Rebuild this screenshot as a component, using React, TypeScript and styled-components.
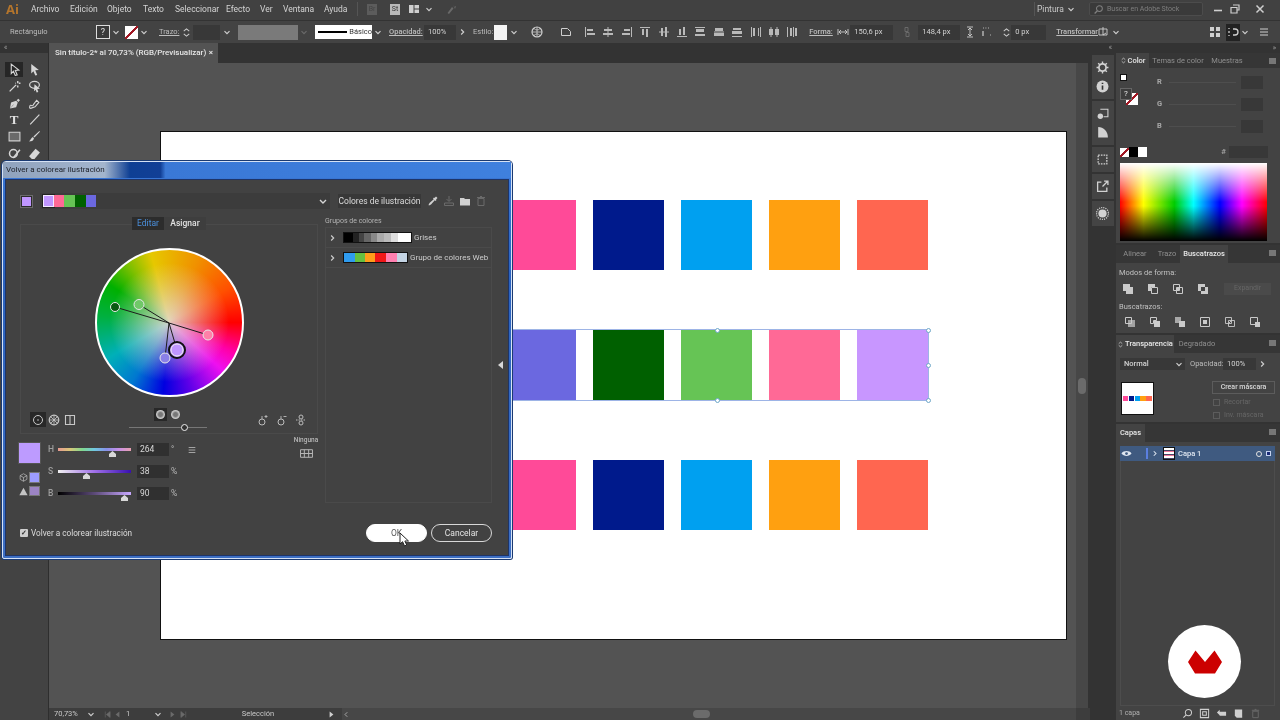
import React from "react";
import styled, { createGlobalStyle } from "styled-components";

const GlobalStyle = createGlobalStyle`
  html, body {
    margin: 0;
    background: #3d3d3d;
    font-family: Roboto, "Liberation Sans", sans-serif;
  }
`;

/* ---------- icons ---------- */
const icons: Record<string, React.ReactNode> = {
  chevron: <path d="M3 5l3 3 3-3" fill="none" stroke="currentColor" strokeWidth="1.4" />,
  right: <path d="M5 3l3 3-3 3" fill="none" stroke="currentColor" strokeWidth="1.4" />,
  left: <path d="M7 3L4 6l3 3" fill="none" stroke="currentColor" strokeWidth="1.2" />,
  play: <path d="M3.5 2l5 4-5 4z" fill="currentColor" />,
  playBack: <path d="M8.5 2l-5 4 5 4z" fill="currentColor" />,
  first: <path d="M3 2v8M9.5 2l-5 4 5 4z" fill="currentColor" stroke="currentColor" strokeWidth=".8" />,
  last: <path d="M9 2v8M2.5 2l5 4-5 4z" fill="currentColor" stroke="currentColor" strokeWidth=".8" />,
  spinner: <path d="M3 4.5L6 2l3 2.5M3 7.5L6 10l3-2.5" fill="none" stroke="currentColor" strokeWidth="1.1" />,
  globe: (
    <>
      <circle cx="6" cy="6" r="5" fill="none" stroke="currentColor" strokeWidth="1.2" />
      <path d="M1 6h10M6 1v10M3 2.5c2 2 4 2 6 0M3 9.5c2-2 4-2 6 0" fill="none" stroke="currentColor" strokeWidth=".8" />
    </>
  ),
  doc: <path d="M1.5 2.5h6l3 3v4h-9z" fill="none" stroke="currentColor" strokeWidth="1" />,
  grid: <path d="M1 1h4v4H1zM7 1h4v4H7zM1 7h4v4H1zM7 7h4v4H7z" fill="currentColor" />,
  list: <path d="M2 3h8M2 6h8M2 9h8" stroke="currentColor" strokeWidth="1" fill="none" />,
  width: <path d="M1 3v6M11 3v6M2 6h8M2 6l2-2M2 6l2 2M10 6L8 4M10 6L8 8" stroke="currentColor" strokeWidth=".9" fill="none" />,
  height: <path d="M3 1h6M3 11h6M6 2v8M6 2L4 4M6 2l2 2M6 10L4 8M6 10l2-2" stroke="currentColor" strokeWidth=".9" fill="none" />,
  link: <path d="M4 1.5h3v4H4zM5 6.5h3v4H5z" stroke="currentColor" fill="none" strokeWidth="1" />,
  corner: <path d="M2 10V5M2 2h.8M4.5 2h.8M7 2h.8M9 9h.8" stroke="currentColor" strokeWidth="1.2" fill="none" />,
  transform: <path d="M2 3h8v6H2zM6 1v8l3-2" stroke="currentColor" strokeWidth=".9" fill="none" />,
  panelDock: <path d="M2 2v1M2 5v2M2 9v1M6 3h2a2 2 0 010 6H6" stroke="currentColor" strokeWidth="1.3" fill="none" />,
  search: (
    <>
      <circle cx="7" cy="5" r="3.2" fill="none" stroke="currentColor" strokeWidth="1.1" />
      <path d="M4.8 7.4L1.8 10.4" stroke="currentColor" strokeWidth="1.4" />
    </>
  ),
  layout: <path d="M1 2h4.5v8H1zM6.5 2H11v3.5H6.5zM6.5 6.5H11V10H6.5z" fill="currentColor" />,
  sync: <path d="M1.5 10L6 4l1.5 1.5L3 11zM7 1l1 3 2-1-1 3" fill="currentColor" />,
  minimize: <path d="M2 7.5h8" stroke="currentColor" strokeWidth="1.6" fill="none" />,
  maximize: <path d="M4 2h6v5H8M2 4.5h6V10H2z" stroke="currentColor" strokeWidth="1.2" fill="none" />,
  close: <path d="M2.5 2.5l7 7M9.5 2.5l-7 7" stroke="currentColor" strokeWidth="1.5" fill="none" />,
  arrowTool: <path d="M3 1l7 5.5-3.3.3L8.5 11 6.7 11.5 5 7.6 3 9.8z" fill="none" stroke="currentColor" strokeWidth="1" />,
  directTool: <path d="M3 1l7 5.5-3.3.3L8.5 11 6.7 11.5 5 7.6 3 9.8z" fill="currentColor" />,
  wand: <path d="M1.5 10.5l6-6M9 1v2M9 5v2M7 3h-.5M11.5 3H10" stroke="currentColor" strokeWidth="1.3" fill="none" />,
  lasso: (
    <>
      <ellipse cx="6" cy="4.5" rx="4.5" ry="3.2" fill="none" stroke="currentColor" strokeWidth="1.1" />
      <path d="M6 4l5 4-2.4.2L9.500 11l-1.500.5-1-2.600L5.500 10.400z" fill="currentColor" />
    </>
  ),
  pen: <path d="M9.5 1.5l1.5 1.5-1.5 1.5-1.5-1.5zM7.5 3.5l1.5 1.5-1.5 4.5-5.5 1 3.2-3.3-.2-.2L1.800 10.500l1-5.500z" fill="currentColor" />,
  curvature: <path d="M1.5 10C1.5 5 4 10 5 7L8 3l2 2-3.5 4-4 1.500z" fill="none" stroke="currentColor" strokeWidth="1" />,
  line: <path d="M2 10.5L10.5 1.5" stroke="currentColor" strokeWidth="1.1" fill="none" />,
  rect: <path d="M1 2h10v8H1z" fill="#6a6a6a" stroke="#cfcfcf" strokeWidth="1" />,
  brush: <path d="M10.5 1L11 1.5 6 7 5 6zM4.5 6.5L5.5 7.5C5 10 3 10.5 1 10.5 2.5 9.5 2.5 7.5 4.5 6.5z" fill="currentColor" />,
  shaper: (
    <>
      <circle cx="5" cy="6" r="3.6" fill="none" stroke="currentColor" strokeWidth="1.4" />
      <path d="M5 10L11 2.5" stroke="currentColor" strokeWidth="1.4" />
    </>
  ),
  eraser: <path d="M7 1.5l4 3.500-5 6H3.500L1 8.500z" fill="currentColor" />,
  eyedropper: <path d="M9 1.5l1.5 1.5-1.5 1.5.5.5-1 1-.7-.7L4 9.500 2 10.500 1.500 10l1-2 4.200-3.800-.7-.7 1-1 .5.5z" fill="currentColor" />,
  download: <path d="M6 1v5M3.5 4L6 6.5 8.5 4M1.5 8h9v2.5h-9z" stroke="currentColor" fill="none" strokeWidth="1" />,
  folder: <path d="M1 3h4l1 1h5v6.500H1z" fill="currentColor" />,
  trash: <path d="M3 3.5h6v7H3zM2 2.5h8M5 1.5h2" stroke="currentColor" fill="none" strokeWidth="1" />,
  gear: (
    <>
      <circle cx="6" cy="6" r="3.3" fill="none" stroke="currentColor" strokeWidth="1.6" />
      <path d="M6 .5v2M6 9.500v2M.5 6h2M9.500 6h2M2 2l1.500 1.500M8.500 8.500L10 10M10 2L8.500 3.500M3.500 8.500L2 10" stroke="currentColor" strokeWidth="1.3" />
    </>
  ),
  info: (
    <>
      <circle cx="6" cy="6" r="5.5" fill="currentColor" />
      <path d="M6 5v4M6 2.5v1.2" stroke="#333" strokeWidth="1.5" />
    </>
  ),
  export: <path d="M5 2H1.5v8.500H10V7M6 6l5-5M7.500 1H11v3.500" stroke="currentColor" fill="none" strokeWidth="1.2" />,
  assets: (
    <>
      <path d="M4 2h7v7H7" stroke="currentColor" fill="none" strokeWidth="1" />
      <circle cx="4" cy="8.5" r="2.5" fill="currentColor" />
    </>
  ),
  shade: <path d="M2 1c5 0 9 4 9 9.500H2z" fill="currentColor" />,
  artboards: <path d="M2 2h8v8H2z" fill="none" stroke="currentColor" strokeWidth="1.2" strokeDasharray="1.5 1" />,
  burst: (
    <>
      <circle cx="6" cy="6" r="3.8" fill="currentColor" />
      <circle cx="6" cy="6" r="5.5" fill="none" stroke="currentColor" strokeWidth="1.2" strokeDasharray="1 1" />
    </>
  ),
  cube: <path d="M6 1l4.500 2.500v5L6 11 1.500 8.500v-5zM1.500 3.500L6 6l4.500-2.500M6 6v5" stroke="currentColor" fill="none" strokeWidth=".9" />,
  warn: <path d="M6 1l5.500 10H.5z" fill="currentColor" />,
  addColor: (
    <>
      <circle cx="5" cy="8" r="3" fill="none" stroke="currentColor" strokeWidth="1" />
      <path d="M5 5V2M9 1v3M7.500 2.500h3" stroke="currentColor" fill="none" strokeWidth=".9" />
    </>
  ),
  subColor: (
    <>
      <circle cx="5" cy="8" r="3" fill="none" stroke="currentColor" strokeWidth="1" />
      <path d="M5 5V2M7.500 2.500h3" stroke="currentColor" fill="none" strokeWidth=".9" />
    </>
  ),
  linkColor: (
    <>
      <circle cx="6" cy="3" r="2" fill="none" stroke="currentColor" strokeWidth="1" />
      <circle cx="6" cy="9" r="2" fill="none" stroke="currentColor" strokeWidth="1" />
      <path d="M1 6h10" stroke="currentColor" strokeWidth="1" strokeDasharray="1.5 1" />
    </>
  ),
  ring: (
    <>
      <circle cx="6" cy="6" r="4.5" fill="none" stroke="currentColor" strokeWidth="1" />
      <circle cx="6" cy="6" r=".8" fill="currentColor" />
    </>
  ),
  segments: (
    <>
      <circle cx="6" cy="6" r="4.8" fill="none" stroke="currentColor" strokeWidth="1.2" />
      <path d="M6 1v10M1 6h10M2.500 2.500l7 7M9.500 2.500l-7 7" stroke="currentColor" strokeWidth=".8" />
    </>
  ),
  bars: <path d="M1.500 1.500h9v9h-9zM6 1.500v9" fill="none" stroke="currentColor" strokeWidth="1.1" />,
  ninguna: <path d="M.5 2.500h11v7H.5zM.5 6h11M4 2.500v7M8 2.500v7" fill="none" stroke="currentColor" strokeWidth=".9" />,
  eye: (
    <>
      <path d="M.5 6C3 2.500 9 2.500 11.500 6 9 9.500 3 9.500.5 6z" fill="currentColor" />
      <circle cx="6" cy="6" r="1.5" fill="#3f5a80" />
    </>
  ),
  zoomGlass: (
    <>
      <circle cx="7" cy="5" r="3.4" fill="none" stroke="currentColor" strokeWidth="1.1" />
      <path d="M4.600 7.500L1.500 10.500" stroke="currentColor" strokeWidth="1.2" />
    </>
  ),
  clip: <path d="M1.500 1.500h9v9h-9zM4 4h4v4H4z" fill="none" stroke="currentColor" strokeWidth="1.1" />,
  moveLayer: <path d="M1 5l3-3v2h7v4.500H4V8z" fill="currentColor" />,
  newLayer: <path d="M2 1.500h8v9H4L2 8.500z" fill="currentColor" />,
  /* pathfinder: two overlapping squares, filled or outlined */
  pfUnite: <path d="M1 1h7v3h3v7H4V8H1z" fill="currentColor" />,
  pfMinus: (
    <>
      <path d="M1 1h7v3H4v4H1z" fill="currentColor" />
      <path d="M4.500 4.500h6v6h-6z" fill="none" stroke="currentColor" strokeWidth="1" />
    </>
  ),
  pfIntersect: (
    <>
      <path d="M1.500 1.500h6v6h-6zM4.500 4.500h6v6h-6z" fill="none" stroke="currentColor" strokeWidth="1" />
      <path d="M4.500 4.500h3v3h-3z" fill="currentColor" />
    </>
  ),
  pfExclude: <path d="M1 1h7v3h3v7H4V8H1zM4 4v4h4V4z" fill="currentColor" fillRule="evenodd" />,
  pfDivide: (
    <>
      <path d="M1.500 1.500h6v6h-6z" fill="none" stroke="currentColor" strokeWidth="1" />
      <path d="M4 4h7v7H4z" fill="currentColor" fillOpacity=".7" />
    </>
  ),
  pfTrim: (
    <>
      <path d="M1.500 1.500h6v3h-3v3h-3z" fill="none" stroke="currentColor" strokeWidth="1" />
      <path d="M5 5h6v6H5z" fill="currentColor" />
    </>
  ),
  pfMerge: (
    <>
      <path d="M1 1h6v6H1z" fill="currentColor" fillOpacity=".75" />
      <path d="M5 5h6v6H5z" fill="currentColor" />
    </>
  ),
  pfCrop: (
    <>
      <path d="M1.500 1.500h9v9h-9z" fill="none" stroke="currentColor" strokeWidth="1" />
      <path d="M4 4h4v4H4z" fill="currentColor" />
    </>
  ),
  pfOutline: <path d="M1.500 1.500h6v6h-6zM4.500 4.500h6v6h-6zM4.500 7.500l3-3" fill="none" stroke="currentColor" strokeWidth=".9" />,
  pfBack: (
    <>
      <path d="M1.500 1.500h7v7h-7z" fill="none" stroke="currentColor" strokeWidth="1" />
      <path d="M6 6h5v5H6z" fill="currentColor" />
    </>
  ),
};

type IconProps = { name: string; size?: number; className?: string };
const Icon = ({ name, size = 12, className }: IconProps) => (
  <svg width={size} height={size} viewBox="0 0 12 12" className={className} style={{ flex: "none" }}>
    {icons[name]}
  </svg>
);

/* align icons of the control bar: a bar and two blocks */
const alignShapes = [
  "M1 1h1v10H1zM3 3h6v2H3zM3 7h8v2H3z",
  "M5.500 1h1v10h-1zM2 3h8v2H2zM1 7h10v2H1z",
  "M10 1h1v10h-1zM3 3h6v2H3zM1 7h8v2H1z",
  "M1 1h10v1H1zM3 3h2v6H3zM7 3h2v8H7z",
  "M1 5.500h10v1H1zM3 2h2v8H3zM7 1h2v10H7z",
  "M1 10h10v1H1zM3 3h2v6H3zM7 1h2v8H7z",
  "M1 1h10v1H1zM2 3h8v3H2zM1 8h10v2H1z",
  "M1 5.500h10v1H1zM2 2h8v3H2zM1 7h10v3H1z",
  "M1 10h10v1H1zM2 2h8v2H2zM1 5h10v3H1z",
  "M1 1h1v10H1zM3 2h2v8H3zM8 2h1v8H8zM10 1h1v10h-1z",
  "M2.500 1h1v10h-1zM1 3h4v6H1zM8.500 1h1v10h-1zM7 3h4v6H7z",
  "M1 1h1v10H1zM4 2h2v8H4zM7 1h1v10H7zM9 2h2v8H9z",
];

/* ---------- page frame ---------- */
const Page = styled.div`
  width: 1280px;
  height: 720px;
  overflow: hidden;
  position: relative;
  display: flex;
  flex-direction: column;
  background: #3d3d3d;
  color: #d8d8d8;
  font-size: 8px;
  line-height: 1;
  filter: blur(0.3px);
`;

const Ghost = styled(Icon)<{ $dim?: boolean }>`
  color: ${(p) => (p.$dim ? "#6a6a6a" : "#d0d0d0")};
`;

/* ---------- menu bar ---------- */
const MenuBar = styled.div`
  height: 20px;
  flex: none;
  display: flex;
  align-items: center;
  background: #414141;
  padding: 0 0 2px 6px;
  box-sizing: border-box;
`;
const AppLogo = styled.div`
  width: 25px;
  flex: none;
  font: 700 13px "Open Sans", sans-serif;
  color: #b4752c;
`;
const MenuItem = styled.span<{ $w: number }>`
  width: ${(p) => p.$w}px;
  flex: none;
  font-size: 8.5px;
  color: #d4d4d4;
`;
const BarSep = styled.div<{ $ml: number }>`
  width: 1px;
  height: 14px;
  flex: none;
  margin-left: ${(p) => p.$ml}px;
  background: #555;
`;
const BridgeBadge = styled.div<{ $on?: boolean; $ml: number }>`
  width: 10px;
  height: 11px;
  flex: none;
  margin-left: ${(p) => p.$ml}px;
  display: flex;
  align-items: center;
  justify-content: center;
  font-size: 7px;
  background: ${(p) => (p.$on ? "#b8b8b8" : "#5c5c5c")};
  color: ${(p) => (p.$on ? "#333" : "#444")};
`;
const Spot = styled.div<{ $ml?: number; $w?: number }>`
  margin-left: ${(p) => p.$ml ?? 0}px;
  width: ${(p) => (p.$w ? `${p.$w}px` : "auto")};
  flex: none;
  display: flex;
  align-items: center;
  justify-content: center;
  color: #cfcfcf;
`;
const Workspace = styled.span`
  margin-left: 2px;
  width: 26px;
  flex: none;
  font-size: 8.5px;
  color: #c8c8c8;
`;
const StockSearch = styled.div`
  margin-left: 13px;
  width: 114px;
  height: 14px;
  flex: none;
  display: flex;
  align-items: center;
  gap: 3px;
  padding-left: 3px;
  box-sizing: border-box;
  background: #3a3a3a;
  border: 1px solid #4c4c4c;
  border-radius: 2px;
  color: #7f7f7f;
  font-size: 7px;
`;

/* ---------- control bar ---------- */
const ControlBar = styled.div`
  height: 23px;
  flex: none;
  display: flex;
  align-items: center;
  padding-left: 10px;
  background: #434343;
  border-top: 1px solid #333;
  box-sizing: border-box;
`;
const CtrlLabel = styled.span<{ $w?: number; $ml?: number; $link?: boolean; $bold?: boolean }>`
  flex: none;
  width: ${(p) => (p.$w ? `${p.$w}px` : "auto")};
  margin-left: ${(p) => p.$ml ?? 0}px;
  font-size: 7.5px;
  color: #bdbdbd;
  font-weight: ${(p) => (p.$bold ? 500 : 400)};
  text-decoration: ${(p) => (p.$link ? "underline" : "none")};
  white-space: nowrap;
`;
const FillBox = styled.div`
  width: 14px;
  height: 14px;
  box-sizing: border-box;
  border: 1px solid #ddd;
  background: #3a3a3a;
  color: #e2e2e2;
  font-size: 9px;
  display: flex;
  align-items: center;
  justify-content: center;
  flex: none;
`;
const NoneBox = styled.div<{ $w?: number }>`
  width: ${(p) => p.$w ?? 13}px;
  height: ${(p) => p.$w ?? 13}px;
  flex: none;
  background:
    linear-gradient(135deg, transparent 44%, #a21824 44%, #a21824 56%, transparent 56%),
    #fff;
`;
const DarkField = styled.div<{ $w: number; $ml?: number; $h?: number }>`
  flex: none;
  width: ${(p) => p.$w}px;
  height: ${(p) => p.$h ?? 15}px;
  margin-left: ${(p) => p.$ml ?? 0}px;
  display: flex;
  align-items: center;
  padding-left: 4px;
  box-sizing: border-box;
  background: #383838;
  color: #d2d2d2;
  font-size: 7.5px;
`;
const GreyField = styled.div`
  flex: none;
  width: 60px;
  height: 15px;
  margin-left: 5px;
  background: #7a7a7a;
`;
const StrokePreview = styled.div`
  flex: none;
  margin-left: 6px;
  width: 57px;
  height: 14px;
  display: flex;
  align-items: center;
  gap: 2px;
  padding-left: 3px;
  box-sizing: border-box;
  background: #fff;
  color: #333;
  font-size: 7.5px;
`;
const StrokeLine = styled.i`
  display: block;
  width: 30px;
  height: 2px;
  background: #000;
`;
const StyleSwatch = styled.div`
  flex: none;
  margin-left: 4px;
  width: 13px;
  height: 15px;
  background: #f4f4f4;
`;
const AlignRow = styled.div`
  margin-left: 9px;
  display: flex;
  gap: 6.4px;
  color: #b9b9b9;
  flex: none;
`;
const ActiveSpot = styled(Spot)`
  background: #222;
  height: 17px;
`;

/* ---------- work area ---------- */
const Work = styled.div`
  flex: 1;
  min-height: 0;
  display: flex;
`;
const ToolBox = styled.div`
  width: 49px;
  flex: none;
  box-sizing: border-box;
  background: #434343;
  border-right: 1px solid #2e2e2e;
  display: flex;
  flex-direction: column;
`;
const CollapseStrip = styled.div<{ $align?: string }>`
  height: 10px;
  flex: none;
  background: #333;
  color: #a0a0a0;
  font-size: 7px;
  display: flex;
  align-items: center;
  justify-content: ${(p) => p.$align ?? "flex-start"};
  padding: 0 4px;
`;
const ToolGrid = styled.div`
  margin-top: 9px;
  padding-left: 5px;
  display: grid;
  grid-template-columns: repeat(2, 20px);
  grid-auto-rows: 16.8px;
  color: #d6d6d6;
`;
const ToolCell = styled.div<{ $active?: boolean }>`
  width: 18px;
  height: 15px;
  display: flex;
  align-items: center;
  justify-content: center;
  background: ${(p) => (p.$active ? "#262626" : "transparent")};
`;
const TextTool = styled.span`
  font: 700 13px "Liberation Serif", serif;
  color: #e0e0e0;
`;

const Center = styled.div`
  flex: none;
  width: 1041px;
  display: flex;
  flex-direction: column;
  background: #333;
`;
const TabStrip = styled.div`
  height: 20px;
  flex: none;
  display: flex;
`;
const DocTab = styled.div`
  width: 169px;
  display: flex;
  align-items: center;
  justify-content: space-between;
  padding: 0 5px 0 6px;
  box-sizing: border-box;
  background: #535353;
  color: #e6e6e6;
  font-size: 8px;
  font-weight: 500;
`;
const DocRow = styled.div`
  flex: 1;
  min-height: 0;
  display: flex;
`;
const Canvas = styled.div`
  width: 1027px;
  flex: none;
  background: #535353;
  padding: 68px 0 0 111px;
  box-sizing: border-box;
`;
const Artboard = styled.div`
  width: 907px;
  height: 509px;
  box-sizing: border-box;
  background: #fff;
  border: 1px solid #111;
  padding: 68px 0 0 344px;
  display: flex;
  flex-direction: column;
  gap: 60px;
`;
const SwatchRow = styled.div<{ $selected?: boolean }>`
  position: relative;
  display: grid;
  grid-template-columns: repeat(5, 71px);
  gap: 17px;
  width: 423px;
  height: 70px;
  ${(p) => p.$selected && "outline: 1px solid #9db4e6;"}
`;
const Square = styled.div<{ $c: string }>`
  background: ${(p) => p.$c};
`;
const Handle = styled.i<{ $x: number; $y: number }>`
  position: absolute;
  left: ${(p) => p.$x}%;
  top: ${(p) => p.$y}%;
  width: 3px;
  height: 3px;
  margin: -2px;
  border-radius: 50%;
  background: #fff;
  border: 1px solid #6fa8c8;
  box-sizing: content-box;
`;
const VScroll = styled.div`
  width: 12px;
  flex: none;
  background: #474747;
  padding-top: 315px;
  box-sizing: border-box;
  display: flex;
  justify-content: center;
`;
const ScrollThumb = styled.div`
  width: 8px;
  height: 16px;
  border-radius: 4px;
  background: #6b6b6b;
`;
const StatusBar = styled.div`
  height: 12px;
  flex: none;
  display: flex;
  align-items: center;
  padding-left: 5px;
  background: #3d3d3d;
  font-size: 7.5px;
  color: #c8c8c8;
`;
const StatusField = styled.span<{ $w: number; $ml?: number; $center?: boolean }>`
  flex: none;
  width: ${(p) => p.$w}px;
  margin-left: ${(p) => p.$ml ?? 0}px;
  text-align: ${(p) => (p.$center ? "center" : "left")};
  white-space: nowrap;
`;
const HTrack = styled.div`
  margin-left: 6px;
  width: 734px;
  height: 12px;
  flex: none;
  background: #474747;
  display: flex;
  align-items: center;
  box-sizing: border-box;
  color: #b0b0b0;
`;
const HThumb = styled.div`
  margin-left: 342px;
  width: 17px;
  height: 8px;
  border-radius: 4px;
  background: #6b6b6b;
`;

/* ---------- dock and panels ---------- */
const Dock = styled.div`
  width: 26px;
  flex: none;
  background: #333;
  display: flex;
  flex-direction: column;
  box-sizing: border-box;
`;
const DockGroups = styled.div`
  padding: 2px 2px 0;
`;
const DockGroup = styled.div`
  background: #444;
  border-bottom: 2px solid #333;
  display: flex;
  flex-direction: column;
  align-items: center;
  gap: 6px;
  padding: 6px 2px 6px 0;
  color: #d2d2d2;
`;
const Panels = styled.div`
  width: 164px;
  flex: none;
  display: flex;
  flex-direction: column;
  background: #333;
`;
const PanelBlock = styled.div<{ $h?: number; $grow?: boolean }>`
  ${(p) => (p.$h ? `height: ${p.$h}px;` : "")}
  ${(p) => (p.$grow ? "flex: 1; min-height: 0;" : "flex: none;")}
  margin-bottom: ${(p) => (p.$grow ? 0 : 2)}px;
  background: #434343;
  display: flex;
  flex-direction: column;
`;
const PanelTabs = styled.div<{ $h?: number }>`
  height: ${(p) => p.$h ?? 18}px;
  flex: none;
  display: flex;
  align-items: stretch;
  background: #363636;
  position: relative;
`;
const PanelTab = styled.div<{ $active?: boolean; $w: number }>`
  width: ${(p) => p.$w}px;
  display: flex;
  align-items: center;
  justify-content: center;
  gap: 1px;
  font-size: 7.5px;
  font-weight: ${(p) => (p.$active ? 500 : 400)};
  color: ${(p) => (p.$active ? "#e8e8e8" : "#8f8f8f")};
  background: ${(p) => (p.$active ? "#434343" : "transparent")};
`;
const PanelMenu = styled.div`
  position: absolute;
  right: 4px;
  top: 5px;
  width: 7px;
  height: 6px;
  background: #777;
`;
const ColorGrid = styled.div`
  display: grid;
  grid-template-columns: 37px 1fr;
  padding: 3px 0 0 4px;
  height: 72px;
`;
const ColorWidget = styled.div`
  position: relative;
  width: 25px;
  height: 30px;
  margin-top: 3px;
`;
const MiniFill = styled.div`
  position: absolute;
  left: 0;
  top: 14px;
  width: 12px;
  height: 12px;
  z-index: 1;
  background: #3c3c3c;
  border: 1px solid #666;
  box-sizing: border-box;
  color: #e8e8e8;
  font-size: 8px;
  display: flex;
  align-items: center;
  justify-content: center;
`;
const MiniStroke = styled(NoneBox)`
  position: absolute;
  left: 6px;
  top: 19px;
`;
const MiniDefault = styled.div`
  width: 7px;
  height: 7px;
  background: #fff;
  border: 1px solid #111;
  box-sizing: border-box;
`;
const RgbRows = styled.div`
  display: grid;
  grid-auto-rows: 22px;
`;
const RgbRow = styled.div`
  display: flex;
  align-items: center;
  color: #a8a8a8;
  font-size: 7.5px;
  font-weight: 700;
`;
const RgbLabel = styled.span`
  width: 12px;
`;
const RgbTrack = styled.div`
  width: 67px;
  height: 1px;
  background: #4e4e4e;
`;
const QuickRow = styled.div`
  display: flex;
  align-items: center;
  padding: 0 12px 0 4px;
  height: 14px;
  margin-top: 2px;
`;
const QuickSwatch = styled.div<{ $c: string }>`
  width: 9px;
  height: 10px;
  background: ${(p) => p.$c};
  flex: none;
`;
const HashMark = styled.span`
  margin-left: auto;
  margin-right: 3px;
  color: #a0a0a0;
  font-size: 8px;
  font-weight: 700;
`;
const Spectrum = styled.div`
  margin: 4px 0 0 4px;
  width: 147px;
  height: 78px;
  background:
    linear-gradient(to bottom, #fff 0%, rgba(255, 255, 255, 0) 50%, rgba(0, 0, 0, 0) 55%, #000 100%),
    linear-gradient(to right, #f00 0%, #ff0 16%, #0c0 37%, #0ff 50%, #00f 68%, #f0f 83%, #f00 100%);
`;
const SmallHead = styled.div<{ $mt?: number }>`
  margin: ${(p) => p.$mt ?? 0}px 0 0 3px;
  font-size: 7.5px;
  color: #c0c0c0;
`;
const FinderRow = styled.div<{ $pl: number; $gap: number }>`
  display: flex;
  align-items: center;
  height: 16px;
  margin-top: 4px;
  padding-left: ${(p) => p.$pl}px;
  gap: ${(p) => p.$gap}px;
  color: #cacaca;
`;
const ExpandBtn = styled.div`
  margin-left: 2px;
  width: 47px;
  height: 12px;
  display: flex;
  align-items: center;
  justify-content: center;
  background: #4a4a4a;
  color: #666;
  font-size: 7px;
`;
const BlendRow = styled.div`
  display: flex;
  align-items: center;
  margin-top: 5px;
  padding-left: 4px;
  height: 12px;
`;
const BlendSelect = styled(DarkField)`
  justify-content: space-between;
  padding-right: 1px;
  font-weight: 500;
`;
const MaskRow = styled.div`
  display: flex;
  margin-top: 12px;
  padding-left: 5px;
`;
const MaskThumb = styled.div`
  width: 33px;
  height: 33px;
  flex: none;
  background: #fff;
  border: 1px solid #111;
  box-sizing: border-box;
  display: flex;
  align-items: center;
  justify-content: center;
`;
const MaskDot = styled.i<{ $c: string }>`
  width: 5.4px;
  height: 5px;
  margin-right: 0.6px;
  background: ${(p) => p.$c};
`;
const MaskOptions = styled.div`
  margin-left: 58px;
  display: flex;
  flex-direction: column;
  margin-top: -1px;
`;
const MaskBtn = styled.div`
  width: 63px;
  height: 13px;
  box-sizing: border-box;
  border: 1px solid #5c5c5c;
  display: flex;
  align-items: center;
  justify-content: center;
  font-size: 7px;
  color: #d8d8d8;
  font-weight: 500;
`;
const MaskCheck = styled.div`
  display: flex;
  align-items: center;
  gap: 4px;
  margin: 4px 0 1px 1px;
  height: 8px;
  font-size: 7px;
  color: #666;
`;
const DimBox = styled.i`
  width: 7px;
  height: 7px;
  border: 1px solid #5c5c5c;
  box-sizing: border-box;
`;
const LayerRow = styled.div`
  margin: 4px 5px 0 4px;
  height: 15px;
  display: flex;
  align-items: center;
  background: #3f5a80;
  color: #dfe6f0;
  font-size: 7.5px;
  font-weight: 500;
`;
const LayerVis = styled.div`
  width: 25px;
  padding-left: 1px;
  display: flex;
  border-right: 2px solid #5a7fe0;
  height: 11px;
  margin-right: 2px;
  align-items: center;
`;
const LayerThumb = styled.div`
  width: 12px;
  height: 13px;
  margin: 0 3px 0 4px;
  background: repeating-linear-gradient(to bottom, #fff 0 2px, #446 2px 3px, #e79 3px 4px);
  border: 1px solid #111;
  box-sizing: border-box;
`;
const TargetDot = styled.i`
  margin-left: auto;
  width: 6px;
  height: 6px;
  border: 1px solid #e2e2e2;
  border-radius: 50%;
  box-sizing: border-box;
`;
const SelectedSquare = styled.i`
  margin: 0 4px;
  width: 5px;
  height: 5px;
  background: #1a2b78;
  border: 1px solid #c5d2ef;
  box-sizing: border-box;
`;
const LayerList = styled.div`
  flex: 1;
  margin: 0 5px 0 4px;
  border: 1px solid #4d4d4d;
  border-top: 0;
`;
const LayerFoot = styled.div`
  height: 14px;
  flex: none;
  display: flex;
  align-items: center;
  padding-left: 3px;
  font-size: 7px;
  color: #b0b0b0;
`;
const LayerTools = styled.div`
  margin-left: 43px;
  display: flex;
  gap: 6px;
  color: #cfcfcf;
`;

/* ---------- the dialog window ---------- */
const Dialog = styled.div`
  position: absolute;
  left: 2px;
  top: 161px;
  width: 510px;
  height: 398px;
  box-sizing: border-box;
  display: flex;
  flex-direction: column;
  border: 1px solid #d6e2f5;
  border-radius: 4px 4px 2px 2px;
  background: linear-gradient(to bottom, #3a78d6 0%, #2b63c0 30%, #3d6fc4 100%);
  box-shadow: 0 0 0 1px #1a3a72;
`;
const TitleBar = styled.div`
  height: 16px;
  flex: none;
  display: flex;
  align-items: center;
  padding-left: 3px;
  font-size: 8px;
  color: #20242c;
  background: linear-gradient(
    90deg,
    #8fa2bd 0,
    #a3b5cd 20%,
    #0e3f94 25%,
    #123f96 31%,
    #3a78d6 32%,
    #3f80de 100%
  );
`;
const DialogBody = styled.div`
  flex: 1;
  position: relative;
  margin: 1px 2px 2px 2px;
  padding: 13px 16px 0 14px;
  background: #424242;
  border: 1px solid #1e3468;
  display: flex;
  flex-direction: column;
`;
const TopRow = styled.div`
  height: 16px;
  flex: none;
  display: flex;
  align-items: center;
`;
const CurrentSwatch = styled.div`
  width: 13px;
  height: 13px;
  flex: none;
  box-sizing: border-box;
  border: 2px solid #2c2c2c;
  outline: 1px solid #6b6b6b;
  outline-offset: -1px;
  background: #c096ff;
`;
const HarmonyBar = styled.div`
  margin-left: 7px;
  width: 290px;
  height: 16px;
  flex: none;
  display: flex;
  align-items: center;
  padding-left: 3px;
  box-sizing: border-box;
  background: #3c3c3c;
  color: #d6d6d6;
`;
const HarmonyChip = styled.div<{ $c: string; $picked?: boolean }>`
  width: 10.7px;
  height: 12px;
  background: ${(p) => p.$c};
  ${(p) => p.$picked && "box-sizing: border-box; border: 1px solid #f2e8ff; box-shadow: 0 0 0 1px #222;"}
`;
const HarmonyArrow = styled(Icon)`
  margin-left: auto;
  margin-right: 1px;
`;
const NameField = styled.div`
  margin-left: 8px;
  width: 83px;
  height: 14px;
  flex: none;
  display: flex;
  align-items: center;
  justify-content: center;
  background: #383838;
  font-size: 8.5px;
  color: #dcdcdc;
`;
const ActionIcons = styled.div`
  margin-left: 6px;
  display: flex;
  gap: 4px;
`;
const Columns = styled.div`
  margin-top: 8px;
  display: flex;
  gap: 7px;
`;
const LeftPane = styled.div`
  width: 298px;
  flex: none;
  display: flex;
  flex-direction: column;
`;
const ModeTabs = styled.div`
  align-self: center;
  display: flex;
  height: 13px;
  margin-bottom: -6px;
  position: relative;
  z-index: 1;
  background: #3e3e3e;
`;
const ModeTab = styled.div<{ $active?: boolean; $w: number }>`
  width: ${(p) => p.$w}px;
  display: flex;
  align-items: center;
  justify-content: center;
  font-size: 8.5px;
  font-weight: ${(p) => (p.$active ? 400 : 500)};
  color: ${(p) => (p.$active ? "#4a8fdc" : "#e2e2e2")};
  background: ${(p) => (p.$active ? "#2c2c2c" : "transparent")};
`;
const WheelBox = styled.div`
  height: 210px;
  box-sizing: border-box;
  border: 1px solid #4a4a4a;
  padding-top: 23px;
  display: flex;
  flex-direction: column;
  align-items: center;
`;
const Wheel = styled.div`
  position: relative;
  width: 149px;
  height: 149px;
  flex: none;
  box-sizing: border-box;
  border-radius: 50%;
  border: 2px solid #fff;
  background:
    radial-gradient(
      circle closest-side,
      rgba(226, 216, 206, 0.92) 0%,
      rgba(226, 216, 206, 0.62) 28%,
      rgba(226, 216, 206, 0.3) 55%,
      rgba(226, 216, 206, 0) 82%
    ),
    conic-gradient(
      from 90deg,
      #ff0000 0deg,
      #ff00a8 25deg,
      #ee10f0 42deg,
      #6000e8 72deg,
      #0000e0 95deg,
      #0078d0 122deg,
      #00b0b8 150deg,
      #00b040 185deg,
      #00b000 212deg,
      #80c000 235deg,
      #e6c800 255deg,
      #f09000 295deg,
      #ff5000 330deg,
      #ff0000 360deg
    );
`;
const WheelOverlay = styled.svg`
  position: absolute;
  left: -2px;
  top: -2px;
`;
const WheelTools = styled.div`
  margin-top: 11px;
  align-self: stretch;
  padding: 0 10px 0 9px;
  display: flex;
  justify-content: space-between;
`;
const ViewGroup = styled.div`
  display: flex;
  align-items: center;
  height: 15px;
  margin-top: 4px;
  color: #c8c8c8;
`;
const ViewBtn = styled.div<{ $active?: boolean }>`
  width: 16px;
  height: 15px;
  display: flex;
  align-items: center;
  justify-content: center;
  background: ${(p) => (p.$active ? "#282828" : "transparent")};
`;
const BrightGroup = styled.div`
  width: 78px;
  display: flex;
  flex-direction: column;
  align-items: center;
`;
const BrightBtns = styled.div`
  display: flex;
  align-items: center;
  margin-left: 3px;
`;
const BrightBtn = styled.div<{ $active?: boolean }>`
  width: 13px;
  height: 13px;
  display: flex;
  align-items: center;
  justify-content: center;
  background: ${(p) => (p.$active ? "#282828" : "transparent")};
  margin-right: 2px;
`;
const BrightDot = styled.i`
  width: 9px;
  height: 9px;
  border-radius: 50%;
  background: radial-gradient(circle, #777 0 30%, #c8c8c8 60%);
  box-sizing: border-box;
`;
const MiniSlider = styled.div`
  position: relative;
  width: 78px;
  height: 1px;
  margin-top: 6px;
  background: #777;
`;
const MiniKnob = styled.i`
  position: absolute;
  left: 52px;
  top: -3px;
  width: 7px;
  height: 7px;
  border-radius: 50%;
  background: #333;
  border: 1.5px solid #eee;
  box-sizing: border-box;
`;
const ColorIcons = styled.div`
  width: 50px;
  margin-top: 6px;
  display: flex;
  justify-content: space-between;
  color: #bcbcbc;
`;

const SliderArea = styled.div`
  margin-top: 9px;
  display: flex;
  position: relative;
  height: 57px;
`;
const SwatchCol = styled.div`
  width: 29px;
  margin-left: -1px;
  flex: none;
`;
const BigSwatch = styled.div`
  width: 21px;
  height: 20px;
  background: #bd9bff;
  box-shadow: 0 0 0 1px #555;
`;
const OutGamut = styled.div<{ $mt: number }>`
  display: flex;
  align-items: center;
  justify-content: space-between;
  width: 21px;
  margin-top: ${(p) => p.$mt}px;
  color: #c4c4c4;
`;
const Chip = styled.div<{ $c: string; $h: number }>`
  width: 11px;
  height: ${(p) => p.$h}px;
  background: ${(p) => p.$c};
  outline: 1px solid #777;
  outline-offset: -1px;
`;
const HsbRows = styled.div`
  display: grid;
  grid-auto-rows: 13px;
  row-gap: 9px;
`;
const HsbRow = styled.div`
  display: flex;
  align-items: center;
`;
const HsbLabel = styled.span`
  width: 10px;
  font-size: 8.5px;
  font-weight: 500;
  color: #9e9e9e;
`;
const HsbTrack = styled.div<{ $bg: string }>`
  position: relative;
  width: 73px;
  height: 3px;
  background: ${(p) => p.$bg};
`;
const HsbThumb = styled.i<{ $x: number }>`
  position: absolute;
  left: ${(p) => p.$x}px;
  top: 3px;
  margin-left: -3px;
  width: 7px;
  height: 6px;
  background: #d8d8d8;
  clip-path: polygon(50% 0, 100% 50%, 100% 100%, 0 100%, 0 50%);
`;
const HsbInput = styled.div`
  margin-left: 6px;
  width: 32px;
  height: 13px;
  display: flex;
  align-items: center;
  padding-left: 3px;
  box-sizing: border-box;
  background: #303030;
  color: #d8d8d8;
  font-size: 8.5px;
`;
const HsbUnit = styled.span`
  margin-left: 2px;
  width: 9px;
  color: #b8b8b8;
  font-size: 8.5px;
`;
const HueMenu = styled.div`
  margin-left: 7px;
  color: #b8b8b8;
  display: flex;
`;
const NoneLib = styled.div`
  position: absolute;
  right: 0;
  top: -6px;
  width: 24px;
  display: flex;
  flex-direction: column;
  align-items: center;
  gap: 3px;
  font-size: 6.5px;
  color: #b8b8b8;
  font-weight: 500;
`;
const RightPane = styled.div`
  flex: 1;
  display: flex;
  flex-direction: column;
`;
const GroupsHead = styled.div`
  height: 9px;
  font-size: 7px;
  color: #b4b4b4;
  display: flex;
  align-items: flex-start;
  margin-top: 1px;
`;
const GroupsBox = styled.div`
  height: 276px;
  border: 1px solid #4a4a4a;
  box-sizing: border-box;
`;
const GroupRow = styled.div`
  height: 20px;
  display: flex;
  align-items: center;
  padding-left: 1px;
  border-bottom: 1px solid #4a4a4a;
  box-sizing: border-box;
  font-size: 8px;
  color: #cdcdcd;
  white-space: nowrap;
  overflow: hidden;
`;
const GroupStrip = styled.div<{ $w: number; $bg: string }>`
  width: ${(p) => p.$w}px;
  height: 11px;
  flex: none;
  margin: 0 2px 0 6px;
  background: ${(p) => p.$bg};
  border: 1px solid #111;
  box-sizing: border-box;
`;
const Collapser = styled.div`
  position: absolute;
  right: 5px;
  top: 181px;
  width: 0;
  height: 0;
  border-top: 4px solid transparent;
  border-bottom: 4px solid transparent;
  border-right: 5px solid #d8d8d8;
`;
const Footer = styled.div`
  margin-top: 21px;
  height: 18px;
  display: flex;
  align-items: center;
`;
const RecolorCheck = styled.div`
  width: 8px;
  height: 8px;
  background: #cfcfcf;
  color: #333;
  border-radius: 1px;
  display: flex;
  align-items: center;
  justify-content: center;
  font-size: 7px;
  font-weight: 700;
`;
const RecolorLabel = styled.span`
  margin-left: 3px;
  font-size: 8.2px;
  color: #dcdcdc;
`;
const PillButton = styled.div<{ $primary?: boolean }>`
  width: 61px;
  height: 18px;
  box-sizing: border-box;
  border-radius: 9px;
  display: flex;
  align-items: center;
  justify-content: center;
  font-size: 8.5px;
  margin-left: ${(p) => (p.$primary ? "auto" : "4px")};
  background: ${(p) => (p.$primary ? "#fff" : "transparent")};
  color: ${(p) => (p.$primary ? "#555" : "#e4e4e4")};
  border: 1px solid ${(p) => (p.$primary ? "#fff" : "#d8d8d8")};
`;
const PointerMark = styled.svg`
  position: absolute;
  left: 399px;
  top: 532px;
`;

/* ---------- watermark ---------- */
const Badge = styled.div`
  position: absolute;
  left: 1168px;
  top: 625px;
  width: 73px;
  height: 73px;
  border-radius: 50%;
  background: #fff;
  display: flex;
  align-items: center;
  justify-content: center;
`;

/* ---------- data ---------- */
const menu: [string, number][] = [
  ["Archivo", 39],
  ["Edición", 37],
  ["Objeto", 36],
  ["Texto", 32],
  ["Seleccionar", 51],
  ["Efecto", 34],
  ["Ver", 23],
  ["Ventana", 41],
  ["Ayuda", 23],
];
const rowOne = ["#ff4a98", "#001a8c", "#00a0f0", "#ffa010", "#ff6650"];
const rowTwo = ["#6b68e0", "#006000", "#66c455", "#ff6996", "#c896ff"];
const handles: [number, number][] = [
  [50, 0],
  [100, 0],
  [100, 50],
  [100, 100],
  [50, 100],
];
const tools = [
  "arrowTool", "directTool", "wand", "lasso", "pen", "curvature", "T", "line", "rect", "brush", "shaper", "eraser",
];
const shapeModes = ["pfUnite", "pfMinus", "pfIntersect", "pfExclude"];
const finders = ["pfDivide", "pfTrim", "pfMerge", "pfCrop", "pfOutline", "pfBack"];
const hsb = [
  { l: "H", v: "264", u: "°", x: 54, bg: "linear-gradient(90deg,#e89a90,#d8c878,#80d890,#70c8e0,#8890e8,#c890e8,#e8a0b0)" },
  { l: "S", v: "38", u: "%", x: 28, bg: "linear-gradient(90deg,#f0f0f0,#a070e8 50%,#3810b0)" },
  { l: "B", v: "90", u: "%", x: 66, bg: "linear-gradient(90deg,#000,#5c4a78 50%,#c8a8ff)" },
];
const greys =
  "linear-gradient(90deg,#000 0 14%,#222 14% 22%,#444 22% 30%,#666 30% 40%,#888 40% 50%,#aaa 50% 60%,#bbb 60% 70%,#ddd 70% 80%,#fff 80%)";
const webColors =
  "linear-gradient(90deg,#2f9cf0 0 17%,#66c040 17% 34%,#ff9d1a 34% 50%,#f01818 50% 67%,#ff80b0 67% 84%,#c4d4e4 84%)";
const markers = [
  { x: 20, y: 59, r: 4.5, c: "#0a5a12" },
  { x: 44, y: 56.5, r: 5, c: "#70c868" },
  { x: 113, y: 87, r: 5, c: "#ff80a8" },
  { x: 70, y: 110, r: 5, c: "#8a80e8" },
];

function App() {
  return (
    <Page>
      <GlobalStyle />
      <MenuBar>
        <AppLogo>Ai</AppLogo>
        {menu.map(([label, w]) => (
          <MenuItem key={label} $w={w}>
            {label}
          </MenuItem>
        ))}
        <BarSep $ml={10} />
        <BridgeBadge $ml={9}>Br</BridgeBadge>
        <BridgeBadge $on $ml={13}>St</BridgeBadge>
        <Spot $ml={8}><Icon name="layout" /></Spot>
        <Spot $ml={4} $w={10}><Icon name="chevron" size={10} /></Spot>
        <Spot $ml={12}><Ghost name="sync" $dim /></Spot>
        <BarSep $ml={576} />
        <Workspace>Pintura</Workspace>
        <Spot $ml={3}><Icon name="chevron" size={10} /></Spot>
        <StockSearch>
          <Icon name="search" size={11} />
          Buscar en Adobe Stock
        </StockSearch>
        <Spot $ml={9}><Icon name="minimize" /></Spot>
        <Spot $ml={5}><Icon name="maximize" /></Spot>
        <Spot $ml={13}><Icon name="close" /></Spot>
      </MenuBar>

      <ControlBar>
        <CtrlLabel $w={86}>Rectángulo</CtrlLabel>
        <FillBox>?</FillBox>
        <Spot $w={12}><Icon name="chevron" size={10} /></Spot>
        <Spot $ml={3}><NoneBox /></Spot>
        <Spot $w={12}><Icon name="chevron" size={10} /></Spot>
        <CtrlLabel $ml={9} $w={17} $link>Trazo:</CtrlLabel>
        <Spot $ml={5} $w={10}><Icon name="spinner" size={11} /></Spot>
        <DarkField $ml={2} $w={27} />
        <Spot $w={13}><Icon name="chevron" size={10} /></Spot>
        <GreyField />
        <Spot $w={11}><Ghost name="chevron" size={10} $dim /></Spot>
        <StrokePreview>
          <StrokeLine />
          Básico
        </StrokePreview>
        <Spot $w={12}><Icon name="chevron" size={10} /></Spot>
        <CtrlLabel $ml={5} $w={31} $link $bold>Opacidad:</CtrlLabel>
        <DarkField $ml={4} $w={32}>100%</DarkField>
        <Spot $w={12}><Icon name="right" size={10} /></Spot>
        <CtrlLabel $ml={5} $w={17}>Estilo:</CtrlLabel>
        <StyleSwatch />
        <Spot $w={13}><Icon name="chevron" size={10} /></Spot>
        <Spot $ml={11}><Icon name="globe" /></Spot>
        <Spot $ml={14} $w={18}><Icon name="doc" /></Spot>
        <AlignRow>
          {alignShapes.map((d) => (
            <svg key={d} width="12" height="12" viewBox="0 0 12 12">
              <path d={d} fill="currentColor" />
            </svg>
          ))}
        </AlignRow>
        <CtrlLabel $ml={11} $w={21} $link $bold>Forma:</CtrlLabel>
        <Spot $ml={7}><Icon name="width" /></Spot>
        <DarkField $ml={1} $w={43}>150,6 px</DarkField>
        <Spot $ml={8}><Ghost name="link" $dim /></Spot>
        <DarkField $ml={5} $w={42}>148,4 px</DarkField>
        <Spot $ml={4}><Icon name="height" /></Spot>
        <Spot $ml={5}><Icon name="corner" /></Spot>
        <Spot $ml={8} $w={10}><Icon name="spinner" size={11} /></Spot>
        <DarkField $w={35}>0 px</DarkField>
        <CtrlLabel $ml={10} $w={36} $link $bold>Transformar</CtrlLabel>
        <Spot $ml={5}><Icon name="transform" /></Spot>
        <Spot $ml={2}><Icon name="chevron" size={10} /></Spot>
        <Spot $ml={88}><Icon name="grid" /></Spot>
        <ActiveSpot $ml={5} $w={14}><Icon name="panelDock" /></ActiveSpot>
        <Spot $w={10}><Icon name="chevron" size={10} /></Spot>
        <Spot $ml={8}><Icon name="list" /></Spot>
      </ControlBar>

      <Work>
        <ToolBox>
          <CollapseStrip>«</CollapseStrip>
          <ToolGrid>
            {tools.map((name, i) => (
              <ToolCell key={name} $active={i === 0}>
                {name === "T" ? <TextTool>T</TextTool> : <Icon name={name} size={13} />}
              </ToolCell>
            ))}
          </ToolGrid>
        </ToolBox>

        <Center>
          <TabStrip>
            <DocTab>
              Sin título-2* al 70,73% (RGB/Previsualizar)
              <span>×</span>
            </DocTab>
          </TabStrip>
          <DocRow>
            <Canvas>
              <Artboard>
                <SwatchRow>
                  {rowOne.map((c) => (
                    <Square key={c} $c={c} />
                  ))}
                </SwatchRow>
                <SwatchRow $selected>
                  {rowTwo.map((c) => (
                    <Square key={c} $c={c} />
                  ))}
                  {handles.map(([x, y]) => (
                    <Handle key={`${x}-${y}`} $x={x} $y={y} />
                  ))}
                </SwatchRow>
                <SwatchRow>
                  {rowOne.map((c) => (
                    <Square key={c} $c={c} />
                  ))}
                </SwatchRow>
              </Artboard>
            </Canvas>
            <VScroll>
              <ScrollThumb />
            </VScroll>
          </DocRow>
          <StatusBar>
            <StatusField $w={30}>70,73%</StatusField>
            <Spot $w={14}><Icon name="chevron" size={10} /></Spot>
            <Spot $ml={4} $w={10}><Ghost name="first" size={9} $dim /></Spot>
            <Spot $w={10}><Ghost name="playBack" size={9} $dim /></Spot>
            <StatusField $ml={4} $w={26}>1</StatusField>
            <Spot $w={12}><Icon name="chevron" size={10} /></Spot>
            <Spot $ml={3} $w={10}><Ghost name="play" size={9} $dim /></Spot>
            <Spot $ml={1} $w={10}><Ghost name="last" size={9} $dim /></Spot>
            <StatusField $ml={10} $w={120} $center>Selección</StatusField>
            <Spot $ml={8} $w={10}><Icon name="play" size={9} /></Spot>
            <HTrack>
              <Icon name="left" size={9} />
              <HThumb />
            </HTrack>
          </StatusBar>
        </Center>

        <Dock>
          <CollapseStrip $align="flex-end">«</CollapseStrip>
          <DockGroups>
            <DockGroup>
              <Icon name="gear" size={13} />
              <Icon name="info" size={13} />
            </DockGroup>
            <DockGroup>
              <Icon name="assets" size={13} />
              <Icon name="shade" size={13} />
            </DockGroup>
            <DockGroup>
              <Icon name="artboards" size={13} />
            </DockGroup>
            <DockGroup>
              <Icon name="export" size={13} />
            </DockGroup>
            <DockGroup>
              <Icon name="burst" size={13} />
            </DockGroup>
          </DockGroups>
        </Dock>

        <Panels>
          <CollapseStrip $align="flex-end">»</CollapseStrip>
          <PanelBlock $h={190}>
            <PanelTabs $h={15}>
              <PanelTab $active $w={33}>
                <Icon name="spinner" size={7} />
                Color
              </PanelTab>
              <PanelTab $w={58}>Temas de color</PanelTab>
              <PanelTab $w={40}>Muestras</PanelTab>
              <PanelMenu />
            </PanelTabs>
            <ColorGrid>
              <ColorWidget>
                <MiniDefault />
                <MiniFill>?</MiniFill>
                <MiniStroke $w={12} />
              </ColorWidget>
              <RgbRows>
                {["R", "G", "B"].map((l) => (
                  <RgbRow key={l}>
                    <RgbLabel>{l}</RgbLabel>
                    <RgbTrack />
                    <DarkField $ml={5} $w={22} $h={13} />
                  </RgbRow>
                ))}
              </RgbRows>
            </ColorGrid>
            <QuickRow>
              <NoneBox $w={9} />
              <QuickSwatch $c="#000" />
              <QuickSwatch $c="#fff" />
              <HashMark>#</HashMark>
              <DarkField $w={39} $h={12} />
            </QuickRow>
            <Spectrum />
          </PanelBlock>

          <PanelBlock $h={88}>
            <PanelTabs>
              <PanelTab $w={38}>Alinear</PanelTab>
              <PanelTab $w={26}>Trazo</PanelTab>
              <PanelTab $active $w={48}>Buscatrazos</PanelTab>
              <PanelMenu />
            </PanelTabs>
            <SmallHead $mt={6}>Modos de forma:</SmallHead>
            <FinderRow $pl={6} $gap={13}>
              {shapeModes.map((name) => (
                <Icon key={name} name={name} />
              ))}
              <ExpandBtn>Expandir</ExpandBtn>
            </FinderRow>
            <SmallHead $mt={6}>Buscatrazos:</SmallHead>
            <FinderRow $pl={8} $gap={13}>
              {finders.map((name) => (
                <Icon key={name} name={name} />
              ))}
            </FinderRow>
          </PanelBlock>

          <PanelBlock $h={87}>
            <PanelTabs>
              <PanelTab $active $w={58}>
                <Icon name="spinner" size={7} />
                Transparencia
              </PanelTab>
              <PanelTab $w={46}>Degradado</PanelTab>
              <PanelMenu />
            </PanelTabs>
            <BlendRow>
              <BlendSelect $w={65} $h={12}>
                Normal
                <Icon name="chevron" size={10} />
              </BlendSelect>
              <CtrlLabel $ml={5} $w={33}>Opacidad:</CtrlLabel>
              <DarkField $w={33} $h={12}>100%</DarkField>
              <Spot $w={12}><Icon name="right" size={10} /></Spot>
            </BlendRow>
            <MaskRow>
              <MaskThumb>
                {rowOne.map((c) => (
                  <MaskDot key={c} $c={c} />
                ))}
              </MaskThumb>
              <MaskOptions>
                <MaskBtn>Crear máscara</MaskBtn>
                <MaskCheck><DimBox />Recortar</MaskCheck>
                <MaskCheck><DimBox />Inv. máscara</MaskCheck>
              </MaskOptions>
            </MaskRow>
          </PanelBlock>

          <PanelBlock $grow>
            <PanelTabs>
              <PanelTab $active $w={29}>Capas</PanelTab>
              <PanelMenu />
            </PanelTabs>
            <LayerRow>
              <LayerVis><Icon name="eye" size={11} /></LayerVis>
              <Icon name="right" size={9} />
              <LayerThumb />
              Capa 1
              <TargetDot />
              <SelectedSquare />
            </LayerRow>
            <LayerList />
            <LayerFoot>
              <StatusField $w={20}>1 capa</StatusField>
              <LayerTools>
                <Icon name="zoomGlass" size={11} />
                <Icon name="clip" size={11} />
                <Icon name="moveLayer" size={11} />
                <Icon name="newLayer" size={11} />
                <Ghost name="trash" size={11} $dim />
              </LayerTools>
            </LayerFoot>
          </PanelBlock>
        </Panels>
      </Work>

      <Dialog>
        <TitleBar>Volver a colorear ilustración</TitleBar>
        <DialogBody>
          <TopRow>
            <CurrentSwatch />
            <HarmonyBar>
              <HarmonyChip $c="#c096ff" $picked />
              <HarmonyChip $c="#ff6996" />
              <HarmonyChip $c="#66c455" />
              <HarmonyChip $c="#006000" />
              <HarmonyChip $c="#6b68e0" />
              <HarmonyArrow name="chevron" />
            </HarmonyBar>
            <NameField>Colores de ilustración</NameField>
            <ActionIcons>
              <Ghost name="eyedropper" />
              <Ghost name="download" $dim />
              <Ghost name="folder" />
              <Ghost name="trash" $dim />
            </ActionIcons>
          </TopRow>

          <Columns>
            <LeftPane>
              <ModeTabs>
                <ModeTab $active $w={32}>Editar</ModeTab>
                <ModeTab $w={42}>Asignar</ModeTab>
              </ModeTabs>
              <WheelBox>
                <Wheel>
                  <WheelOverlay width="149" height="149" viewBox="0 0 149 149">
                    {[...markers, { x: 82, y: 102 }].map((m) => (
                      <line key={m.x} x1="74" y1="75" x2={m.x} y2={m.y} stroke="#1c1c1c" strokeWidth="1" />
                    ))}
                    {markers.map((m) => (
                      <circle key={m.x} cx={m.x} cy={m.y} r={m.r} fill={m.c} stroke="#e8e8e8" strokeWidth="1" />
                    ))}
                    <circle cx="82" cy="102" r="8" fill="#c096ff" stroke="#111" strokeWidth="2" />
                    <circle cx="82" cy="102" r="6" fill="none" stroke="#eee" strokeWidth="1" />
                  </WheelOverlay>
                </Wheel>
                <WheelTools>
                  <ViewGroup>
                    <ViewBtn $active><Icon name="ring" /></ViewBtn>
                    <ViewBtn><Icon name="segments" /></ViewBtn>
                    <ViewBtn><Icon name="bars" /></ViewBtn>
                  </ViewGroup>
                  <BrightGroup>
                    <BrightBtns>
                      <BrightBtn $active><BrightDot /></BrightBtn>
                      <BrightBtn><BrightDot /></BrightBtn>
                    </BrightBtns>
                    <MiniSlider>
                      <MiniKnob />
                    </MiniSlider>
                  </BrightGroup>
                  <ColorIcons>
                    <Icon name="addColor" />
                    <Icon name="subColor" />
                    <Icon name="linkColor" />
                  </ColorIcons>
                </WheelTools>
              </WheelBox>

              <SliderArea>
                <SwatchCol>
                  <BigSwatch />
                  <OutGamut $mt={9}>
                    <Icon name="cube" size={9} />
                    <Chip $c="#9d9dff" $h={11} />
                  </OutGamut>
                  <OutGamut $mt={3}>
                    <Icon name="warn" size={9} />
                    <Chip $c="#9c84c4" $h={10} />
                  </OutGamut>
                </SwatchCol>
                <HsbRows>
                  {hsb.map((row) => (
                    <HsbRow key={row.l}>
                      <HsbLabel>{row.l}</HsbLabel>
                      <HsbTrack $bg={row.bg}>
                        <HsbThumb $x={row.x} />
                      </HsbTrack>
                      <HsbInput>{row.v}</HsbInput>
                      <HsbUnit>{row.u}</HsbUnit>
                      {row.l === "H" && (
                        <HueMenu><Icon name="list" size={10} /></HueMenu>
                      )}
                    </HsbRow>
                  ))}
                </HsbRows>
                <NoneLib>
                  Ninguna
                  <Icon name="ninguna" size={13} />
                </NoneLib>
              </SliderArea>
            </LeftPane>

            <RightPane>
              <GroupsHead>Grupos de colores</GroupsHead>
              <GroupsBox>
                <GroupRow>
                  <Icon name="right" size={10} />
                  <GroupStrip $w={69} $bg={greys} />
                  Grises
                </GroupRow>
                <GroupRow>
                  <Icon name="right" size={10} />
                  <GroupStrip $w={65} $bg={webColors} />
                  Grupo de colores Web
                </GroupRow>
              </GroupsBox>
            </RightPane>
          </Columns>

          <Footer>
            <RecolorCheck>✓</RecolorCheck>
            <RecolorLabel>Volver a colorear ilustración</RecolorLabel>
            <PillButton $primary>OK</PillButton>
            <PillButton>Cancelar</PillButton>
          </Footer>
          <Collapser />
        </DialogBody>
      </Dialog>

      <PointerMark width="11" height="16" viewBox="0 0 11 16">
        <path d="M1 1v11l2.6-2.3L5.5 14l2.2-1-1.8-4H9.5z" fill="#fff" stroke="#222" strokeWidth="1" />
      </PointerMark>

      <Badge>
        <svg width="36" height="24" viewBox="0 0 36 24">
          <path d="M1 12L8.5 0.5 18 12 27.5.5 35 12 28 23.5H8z" fill="#cc0000" />
        </svg>
      </Badge>
    </Page>
  );
}

export default App;
